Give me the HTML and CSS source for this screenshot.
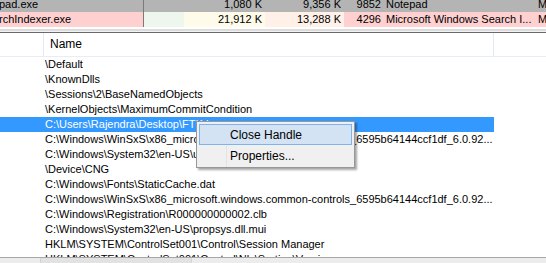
FILE: index.html
```html
<!DOCTYPE html>
<html lang="en">

<head>
    <meta charset="UTF-8">
    <title>Process Explorer - Handles</title>
    <link rel="stylesheet" href="styles.css">
</head>

<body>
    <div id="window">
        <!-- process list (top pane) -->
        <div id="procs">
            <div class="prow gray">
                <div class="c name">pad.exe</div>
                <div class="c cpu"></div>
                <div class="c pb">1,080 K</div>
                <div class="c ws">9,356 K</div>
                <div class="c pid">9852</div>
                <div class="c desc">Notepad</div>
                <div class="c comp">Mi</div>
            </div>
            <div class="prow pink">
                <div class="c name">rchIndexer.exe</div>
                <div class="c cpu green"></div>
                <div class="c pb yellow">21,912 K</div>
                <div class="c ws peach">13,288 K</div>
                <div class="c pid">4296</div>
                <div class="c desc">Microsoft Windows Search I...</div>
                <div class="c comp">Mi</div>
            </div>
        </div>
        <div id="splitter"></div>

        <!-- handle list (bottom pane) -->
        <div id="handles">
            <div class="hhead">
                <div class="h type"></div>
                <div class="h hname">Name</div>
                <div class="h rest"></div>
            </div>
            <ul id="list">
                <li>\Default</li>
                <li>\KnownDlls</li>
                <li>\Sessions\2\BaseNamedObjects</li>
                <li>\KernelObjects\MaximumCommitCondition</li>
                <li class="active">C:\Users\Rajendra\Desktop\FTK Imager</li>
                <li>C:\Windows\WinSxS\x86_microsoft.windows.common-controls_6595b64144ccf1df_6.0.92...</li>
                <li>C:\Windows\System32\en-US\user32.dll.mui</li>
                <li>\Device\CNG</li>
                <li>C:\Windows\Fonts\StaticCache.dat</li>
                <li>C:\Windows\WinSxS\x86_microsoft.windows.common-controls_6595b64144ccf1df_6.0.92...</li>
                <li>C:\Windows\Registration\R000000000002.clb</li>
                <li>C:\Windows\System32\en-US\propsys.dll.mui</li>
                <li>HKLM\SYSTEM\ControlSet001\Control\Session Manager</li>
                <li>HKLM\SYSTEM\ControlSet001\Control\Nls\Sorting\Versions</li>
            </ul>
            <div id="hscroll">
                <div class="thumb"></div>
            </div>
        </div>

        <!-- right click menu -->
        <div id="menu">
            <div class="item active">Close Handle</div>
            <div class="item">Properties...</div>
        </div>
    </div>
</body>

</html>
```

FILE: styles.css
```css
* {
    margin: 0;
    padding: 0;
    box-sizing: border-box;
}

body {
    width: 546px;
    height: 263px;
    overflow: hidden;
    background: #ffffff;
    font-family: "Liberation Sans", Arial, sans-serif;
    font-size: 11px;
    color: #000000;
}

li {
    list-style: none;
}

#window {
    position: relative;
    height: 263px;
    overflow: hidden;
}

/* top pane */
#procs {
    margin-top: -3px;
}

.prow {
    display: flex;
    height: 15px;
    line-height: 15px;
    white-space: nowrap;
}

.prow.gray {
    background: #b4b4b4;
}

.prow.pink {
    background: #ffd0d0;
}

.c {
    overflow: hidden;
}

.name {
    width: 144px;
    border-right: 1px solid #7a7a7a;
    text-indent: -1px;
}

.cpu {
    width: 40px;
}

.pb {
    width: 81px;
    text-align: right;
    padding-right: 3px;
}

.ws {
    width: 79px;
    text-align: right;
    padding-right: 3px;
}

.pid {
    width: 38px;
    text-align: right;
    padding-right: 1px;
}

.desc {
    width: 152px;
    padding-left: 4px;
}

.comp {
    flex: 1;
    padding-left: 4px;
}

.green {
    background: #eef7ee;
}

.yellow {
    background: #fffbea;
}

.peach {
    background: #fff0e8;
}

#splitter {
    height: 6px;
    border-top: 2px solid #ffffff;
    border-bottom: 1px solid #6a6a6a;
    background: linear-gradient(#dcdcdc 0, #dcdcdc 2px, #f2f2f2 2px);
}

/* bottom pane */
.hhead {
    display: flex;
    height: 24px;
    border-bottom: 1px solid #e8edf5;
    font-size: 12px;
    line-height: 23px;
}

.h {
    border-right: 1px solid #e3e8f2;
}

.type {
    width: 44px;
}

.hname {
    width: 450px;
    padding-left: 6px;
}

.rest {
    flex: 1;
    border-right: none;
}

#list {
    height: 200px;
    overflow: hidden;
}

#list>li {
    height: 15px;
    line-height: 15px;
    padding-left: 45px;
    white-space: nowrap;
    overflow: hidden;
    width: 494px;
}

#list>li.active {
    background: #3399ff;
    color: #ffffff;
}

#hscroll {
    height: 6px;
    border-top: 1px solid #a7a7a7;
    background: #ececec;
}

#hscroll .thumb {
    margin-left: 40px;
    width: 152px;
    height: 5px;
    border-left: 1px solid #d4d4d4;
    border-right: 1px solid #d4d4d4;
    background: #e2e2e2;
}

/* context menu */
#menu {
    position: absolute;
    left: 196px;
    top: 121px;
    width: 159px;
    height: 47px;
    padding: 2px;
    background: #f0f0f0 linear-gradient(#e2e3e3, #e2e3e3) no-repeat 29px 2px / 1px 43px;
    border: 1px solid #979797;
    box-shadow: 2px 2px 2px rgba(0, 0, 0, 0.35);
    font-size: 12px;
}

#menu .item {
    height: 21px;
    line-height: 20px;
    padding-left: 30px;
    border: 1px solid transparent;
}

#menu .item.active {
    background: #d3e3f3;
    border-color: #7eb4ea;
}
```
